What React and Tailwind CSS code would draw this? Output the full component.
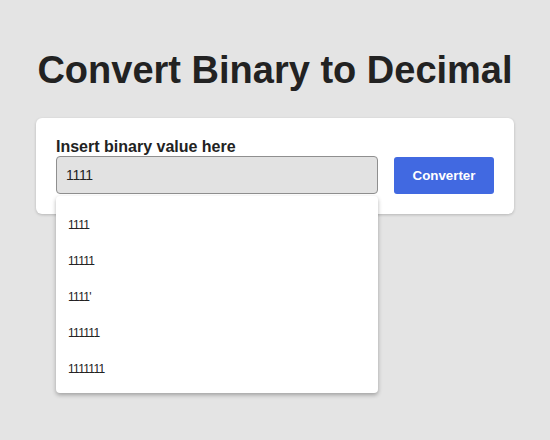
import React from "react";

export default function App() {
  const items = ["1111", "11111", "1111'", "111111", "1111111"];
  return (
    <div
      className="w-[550px] h-[440px] bg-[#e4e4e4] overflow-hidden"
      style={{ fontFamily: '"Liberation Sans", Arial, sans-serif' }}
    >
      <h1 className="pt-[48px] text-center text-[38px] leading-[44px] font-bold text-[#222222]">
        Convert Binary to Decimal
      </h1>
      <div className="mt-[26px] mx-auto w-[478px] bg-white rounded-[6px] shadow-[0_1px_3px_rgba(0,0,0,0.2)] px-[20px] pt-[20px] pb-[20px]">
        <div className="text-[16px] leading-[18px] font-bold text-[#222222]">Insert binary value here</div>
        <div className="flex items-start gap-[16px]">
          <div className="relative w-[322px]">
            <div className="h-[38px] bg-[#e2e2e2] border border-[#8f8f8f] rounded-[4px] flex items-center pl-[9px] text-[14px] tracking-[-0.3px] text-[#222222]">
              1111
            </div>
            <div className="absolute left-0 top-[40px] w-[322px] bg-white rounded-[4px] shadow-[0_2px_4px_rgba(0,0,0,0.3)] pt-[11px] pb-[6px] z-10">
              {items.map((t) => (
                <div key={t} className="h-[36px] flex items-center pl-[12px] text-[12px] tracking-[-0.7px] text-[#222222]">
                  {t}
                </div>
              ))}
            </div>
          </div>
          <button className="mt-[1px] w-[100px] h-[37px] bg-[#4169e1] rounded-[3px] text-white text-[13.33px] font-bold">
            Converter
          </button>
        </div>
      </div>
    </div>
  );
}
